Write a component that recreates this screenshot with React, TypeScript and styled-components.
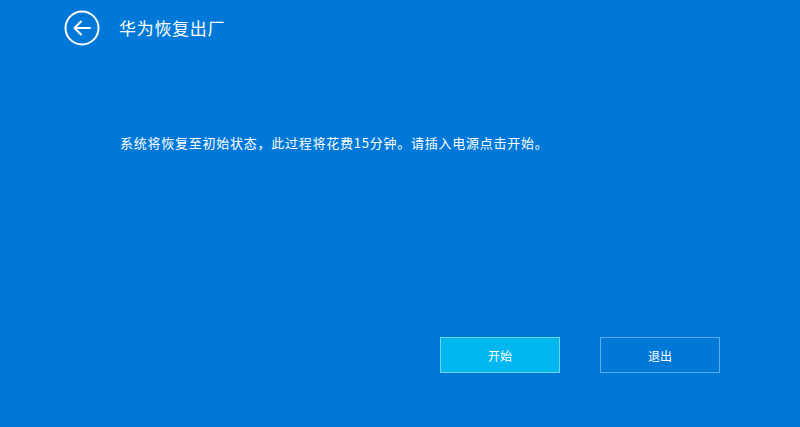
import React from "react";
import styled, { createGlobalStyle } from "styled-components";

const GlobalStyle = createGlobalStyle`
  html, body {
    margin: 0;
    padding: 0;
    background: #0078d7;
  }
  body {
    font-family: "Noto Sans CJK SC", "Liberation Sans", sans-serif;
    color: #ffffff;
  }
`;

const Screen = styled.div`
  width: 800px;
  height: 427px;
  background: #0078d7;
  display: flex;
  flex-direction: column;
  overflow: hidden;
`;

const Header = styled.div`
  display: flex;
  align-items: center;
  gap: 19px;
  padding: 10px 0 0 64px;
  height: 36px;
`;

const BackButton = styled.button`
  width: 36px;
  height: 36px;
  padding: 0;
  border: none;
  background: transparent;
  cursor: pointer;
  display: flex;
`;

const Title = styled.h1`
  margin: 0;
  font-size: 17px;
  font-weight: 400;
  letter-spacing: 0.7px;
  line-height: 36px;
  color: #ffffff;
`;

const Message = styled.p`
  margin: 87px 0 0 120px;
  font-size: 13px;
  line-height: 20px;
  letter-spacing: 0.75px;
  color: #ffffff;
`;

const Actions = styled.div`
  margin-top: auto;
  display: flex;
  gap: 40px;
  padding: 0 80px 54px 440px;
`;

const ActionButton = styled.button<{ $primary?: boolean }>`
  width: 120px;
  height: 36px;
  box-sizing: border-box;
  border: 1px solid ${(p) => (p.$primary ? "#6fd3f7" : "#5eaaea")};
  background: ${(p) => (p.$primary ? "#00b7ef" : "#0078d7")};
  color: #ffffff;
  font-family: "Noto Sans CJK SC", "Liberation Sans", sans-serif;
  font-size: 12px;
  cursor: pointer;
`;

const BackIcon = () => (
  <svg width="36" height="36" viewBox="0 0 36 36" fill="none">
    <circle cx="18" cy="18" r="16.5" stroke="#ffffff" strokeWidth="2" />
    <path
      d="M26 18H10.5M17 11.5L10.5 18L17 24.5"
      stroke="#ffffff"
      strokeWidth="2"
      strokeLinecap="round"
      strokeLinejoin="round"
    />
  </svg>
);

export default function App() {
  return (
    <Screen>
      <GlobalStyle />
      <Header>
        <BackButton aria-label="返回">
          <BackIcon />
        </BackButton>
        <Title>华为恢复出厂</Title>
      </Header>
      <Message>系统将恢复至初始状态，此过程将花费15分钟。请插入电源点击开始。</Message>
      <Actions>
        <ActionButton $primary>开始</ActionButton>
        <ActionButton>退出</ActionButton>
      </Actions>
    </Screen>
  );
}
